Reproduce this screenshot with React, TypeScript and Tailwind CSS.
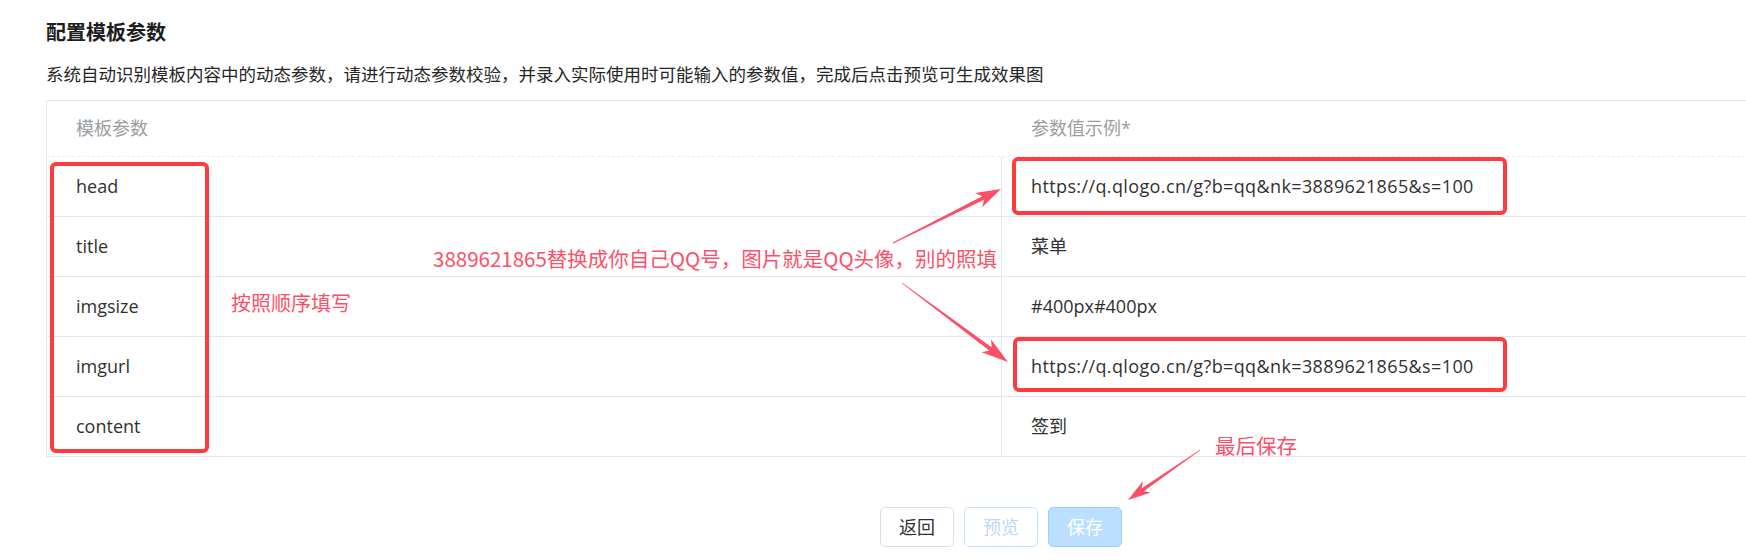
import React from "react";

const rows: [string, string][] = [
  ["head", "https://q.qlogo.cn/g?b=qq&nk=3889621865&s=100"],
  ["title", "菜单"],
  ["imgsize", "#400px#400px"],
  ["imgurl", "https://q.qlogo.cn/g?b=qq&nk=3889621865&s=100"],
  ["content", "签到"],
];

function arrowPoints(
  x1: number,
  y1: number,
  x2: number,
  y2: number,
  headLen: number,
  headW: number,
  shaftW: number
) {
  const dx = x2 - x1;
  const dy = y2 - y1;
  const L = Math.hypot(dx, dy);
  const ux = dx / L;
  const uy = dy / L;
  const nx = -uy;
  const ny = ux;
  const bx = x2 - ux * headLen;
  const by = y2 - uy * headLen;
  const sx = bx - ux * 5;
  const sy = by - uy * 5;
  const pts: [number, number][] = [
    [x1 + nx * 0.4, y1 + ny * 0.4],
    [bx + (nx * shaftW) / 2, by + (ny * shaftW) / 2],
    [sx + nx * headW, sy + ny * headW],
    [x2, y2],
    [sx - nx * headW, sy - ny * headW],
    [bx - (nx * shaftW) / 2, by - (ny * shaftW) / 2],
    [x1 - nx * 0.4, y1 - ny * 0.4],
  ];
  return pts.map((p) => `${p[0].toFixed(1)},${p[1].toFixed(1)}`).join(" ");
}

export default function App() {
  return (
    <div
      className="relative w-[1746px] h-[560px] overflow-hidden bg-white text-[#303133]"
      style={{ fontFamily: '"Open Sans", "Noto Sans CJK SC", sans-serif' }}
    >
      <div className="w-[1956px] pl-[46px] pt-[19px]">
        <div className="text-[20px] leading-[28px] font-bold text-[#1d1d1f]">配置模板参数</div>
        <div className="mt-[15px] text-[17.5px] leading-[24px] text-[#262626]">
          系统自动识别模板内容中的动态参数，请进行动态参数校验，并录入实际使用时可能输入的参数值，完成后点击预览可生成效果图
        </div>
        <div className="mt-[14px] w-[1910px] border border-[#e4e7ed]">
          <div className="grid grid-cols-2 h-[56px] border-b border-dashed border-[#ebeef5] text-[18px] text-[#9a9da2]">
            <div className="flex items-center pl-[29px]">模板参数</div>
            <div className="flex items-center pl-[30px]">参数值示例*</div>
          </div>
          {rows.map(([k, v], i) => (
            <div
              key={k}
              className={
                i < rows.length - 1
                  ? "grid grid-cols-2 h-[60px] border-b border-[#e4e7ed] text-[18px]"
                  : "grid grid-cols-2 h-[59px] text-[18px]"
              }
            >
              <div className="flex items-center pl-[29px]">{k}</div>
              <div className="flex items-center pl-[29px] border-l border-[#e4e7ed]">
                <span className={v.startsWith("https") ? "tracking-[0.38px]" : ""}>{v}</span>
              </div>
            </div>
          ))}
        </div>
        <div className="mt-[50px] w-[1910px] flex justify-center gap-[10px]">
          <button className="w-[74px] h-[40px] rounded-[5px] border border-[#dcdfe6] bg-white text-[18px] text-[#303133]">
            返回
          </button>
          <button className="w-[74px] h-[40px] rounded-[5px] border border-[#c6e2ff] bg-white text-[18px] text-[#c0d8f4]">
            预览
          </button>
          <button className="w-[74px] h-[40px] rounded-[5px] border border-[#a0cfff] bg-[#bddfff] text-[18px] text-white">
            保存
          </button>
        </div>
      </div>

      {/* annotation overlay */}
      <div className="absolute left-[50px] top-[162px] w-[159px] h-[291px] border-4 border-[#fd3c3f] rounded-[6px]" />
      <div className="absolute left-[1012px] top-[157px] w-[495px] h-[58px] border-4 border-[#fd3c3f] rounded-[6px]" />
      <div className="absolute left-[1013px] top-[337px] w-[494px] h-[55px] border-4 border-[#fd3c3f] rounded-[6px]" />

      <div
        className="absolute left-[433px] top-[244px] text-[20.5px] leading-[28px] text-[#fb5068] whitespace-nowrap"
        style={{ fontFamily: '"Noto Sans CJK SC", sans-serif' }}
      >
        3889621865替换成你自己QQ号，图片就是QQ头像，别的照填
      </div>
      <div
        className="absolute left-[231px] top-[289px] text-[20px] leading-[28px] text-[#fb5068] whitespace-nowrap"
        style={{ fontFamily: '"Noto Sans CJK SC", sans-serif' }}
      >
        按照顺序填写
      </div>
      <div
        className="absolute left-[1215px] top-[431px] text-[20.5px] leading-[28px] text-[#fb5068] whitespace-nowrap"
        style={{ fontFamily: '"Noto Sans CJK SC", sans-serif' }}
      >
        最后保存
      </div>

      <svg className="absolute left-0 top-0 w-[1746px] h-[560px] pointer-events-none" viewBox="0 0 1746 560">
        <polygon points={arrowPoints(893, 243, 1001, 189, 20, 8, 4)} fill="#fc4f67" />
        <polygon points={arrowPoints(902, 283, 1008, 362, 22, 8, 4)} fill="#fc4f67" />
        <polygon points={arrowPoints(1200, 450, 1128, 500, 18, 7, 3.5)} fill="#fc4f67" />
      </svg>
    </div>
  );
}
